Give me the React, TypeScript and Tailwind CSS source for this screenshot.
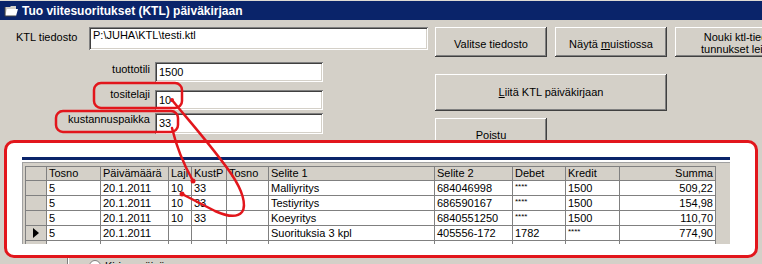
import React from 'react';

const FONT = "font-['Liberation_Sans',Arial,sans-serif]";

const BTN =
  'flex items-center justify-center bg-[#d4d0c8] text-[11px] text-black shadow-[inset_-1px_-1px_#404040,inset_1px_1px_#ffffff,inset_-2px_-2px_#808080,inset_2px_2px_#d4d0c8]';
const INPUT =
  'bg-white text-[11px] leading-[13px] text-black pl-[4px] shadow-[inset_1px_1px_#808080,inset_-1px_-1px_#ffffff,inset_2px_2px_#404040,inset_-2px_-2px_#d4d0c8]';

const COLS = [
  { w: 'w-[54px]', label: 'Tosno' },
  { w: 'w-[68px]', label: 'Päivämäärä' },
  { w: 'w-[23px]', label: 'Laji' },
  { w: 'w-[35px]', label: 'KustP' },
  { w: 'w-[42px]', label: 'Tosno' },
  { w: 'w-[166px]', label: 'Selite 1' },
  { w: 'w-[78px]', label: 'Selite 2' },
  { w: 'w-[53px]', label: 'Debet' },
  { w: 'w-[54px]', label: 'Kredit' },
  { w: 'w-[96px]', label: 'Summa', right: true },
];

const ROWS = [
  ['5', '20.1.2011', '10', '33', '', 'Malliyritys', '684046998', '****', '1500', '509,22'],
  ['5', '20.1.2011', '10', '33', '', 'Testiyritys', '686590167', '****', '1500', '154,98'],
  ['5', '20.1.2011', '10', '33', '', 'Koeyritys', '6840551250', '****', '1500', '110,70'],
  ['5', '20.1.2011', '', '', '', 'Suorituksia 3 kpl', '405556-172', '1782', '****', '774,90'],
  ['', '', '', '', '', '', '', '', '', ''],
];

function Cell({ w, right, text }: { w: string; right?: boolean; text: string }) {
  const stars = text === '****';
  return (
    <div
      className={`${w} h-full shrink-0 border-r border-b border-[#808080] bg-white overflow-hidden whitespace-nowrap px-[2px] flex ${
        right ? 'justify-end' : ''
      } ${stars ? 'items-start pt-[2px] text-[8px] leading-[8px]' : 'items-center text-[11px] leading-[13px]'}`}
    >
      {text}
    </div>
  );
}

function Grid() {
  return (
    <div className="border-t border-l border-[#808080] w-[691px]">
      {/* header */}
      <div className="flex h-[14px]">
        <div className="w-[21px] h-full shrink-0 bg-[#d4d0c8] border-r border-b border-[#808080]" />
        {COLS.map((c, i) => (
          <div
            key={i}
            className={`${c.w} h-full shrink-0 bg-[#d4d0c8] border-r border-b border-[#808080] px-[2px] flex items-center text-[11px] leading-[13px] whitespace-nowrap overflow-hidden ${
              c.right ? 'justify-end' : ''
            }`}
          >
            {c.label}
          </div>
        ))}
      </div>
      {ROWS.map((r, ri) => (
        <div key={ri} className="flex h-[15px]">
          <div className="w-[21px] h-full shrink-0 bg-[#d4d0c8] border-r border-b border-[#808080] flex items-center justify-center">
            {ri === 3 && (
              <svg width="8" height="10" viewBox="0 0 8 10">
                <path d="M1 0 L7 5 L1 10 Z" fill="#000" />
              </svg>
            )}
          </div>
          {COLS.map((c, ci) => (
            <Cell key={ci} w={c.w} right={c.right} text={r[ci]} />
          ))}
        </div>
      ))}
    </div>
  );
}

export default function App() {
  return (
    <div className={`${FONT} relative w-[762px] h-[264px] overflow-hidden bg-[#d4d0c8] text-black`}>
      {/* title bar */}
      <div className="h-[20px] border-t border-[#dedbd4] bg-[#0a246a] flex items-center pl-[4px]">
        <svg width="15" height="13" viewBox="0 0 15 13" className="shrink-0">
          <path d="M1 3 L6 3 L7 2 L12 2 L12 11 L1 11 Z" fill="#d4d0c8" />
          <path d="M3 5 L14 5 L12 12 L1 12 Z" fill="#ffffff" />
          <path d="M1 3 L1 12 L12 12" stroke="#404040" strokeWidth="1" fill="none" />
        </svg>
        <span className="ml-[3px] text-[12px] font-bold text-white leading-[14px] whitespace-nowrap">
          Tuo viitesuoritukset (KTL) päiväkirjaan
        </span>
      </div>

      {/* form */}
      <div className="h-[120px] overflow-hidden">
        <div className="mt-[7px] flex items-start">
          <div className="w-[89px] shrink-0 pl-[16px] pt-[4px] text-[11px] leading-[13px]">KTL tiedosto</div>
          <div className={`${INPUT} w-[339px] h-[23px] shrink-0 pt-[2px]`}>P:\JUHA\KTL\testi.ktl</div>
          <div className={`${BTN} ml-[7px] w-[112px] h-[30px] shrink-0 pt-[4px]`}>Valitse tiedosto</div>
          <div className={`${BTN} ml-[8px] w-[112px] h-[30px] shrink-0 pt-[4px]`}>
            Näytä&nbsp;<span className="underline">m</span>uistiossa
          </div>
          <div className={`${BTN} ml-[8px] w-[148px] h-[30px] shrink-0 text-center leading-[12px] pt-[2px]`}>
            Nouki ktl-tiedoston
            <br />
            tunnukset leikkeelle
          </div>
        </div>

        <div className="flex items-start">
          <div className="w-[435px] shrink-0">
            <div className="mt-[5px] flex items-start">
              <div className="w-[150px] text-right text-[11px] leading-[13px] pt-[1px]">tuottotili</div>
              <div className={`${INPUT} ml-[5px] w-[168px] h-[20px] pt-[4px]`}>1500</div>
            </div>
            <div className="mt-[8px] flex items-start">
              <div className="w-[150px] text-right text-[11px] leading-[13px] -mt-[2px]">tositelaji</div>
              <div className={`${INPUT} ml-[5px] w-[168px] h-[20px] pt-[4px]`}>10</div>
            </div>
            <div className="mt-[3px] flex items-start">
              <div className="w-[150px] text-right text-[11px] leading-[13px]">kustannuspaikka</div>
              <div className={`${INPUT} ml-[5px] w-[168px] h-[21px] pt-[4px]`}>33</div>
            </div>
          </div>
          <div className="flex flex-col">
            <div className={`${BTN} mt-[17px] w-[232px] h-[37px]`}>
              <span className="underline">L</span>iitä KTL päiväkirjaan
            </div>
            <div className={`${BTN} mt-[7px] w-[112px] h-[30px] pt-[4px]`}>Poistu</div>
          </div>
        </div>
      </div>

      {/* annotated grid area */}
      <div className="ml-[4px] w-[754px] h-[118px] rounded-[10px] border-[3px] border-[#e2161c] bg-white pt-[14px] pl-[15px]">
        <div className="w-[708px]">
          <div className="h-[3px] bg-[#0a246a]" />
          <div className="h-[2px] bg-white" />
          <div className="h-[82px] overflow-hidden bg-[#d4d0c8] border-t border-l border-[#a0a0a0] pl-[2px] pt-[3px]">
            <Grid />
          </div>
        </div>
      </div>

      {/* bottom strip */}
      <div className="flex h-[20px]">
        <div className="ml-[67px] w-[2px] h-full border-l border-[#808080] border-r border-r-white" />
        <div className="ml-[20px] flex items-start pt-[2px] gap-[4px]">
          <div className="w-[12px] h-[12px] rounded-full bg-white border border-[#808080] flex items-center justify-center">
            <div className="w-[4px] h-[4px] rounded-full bg-black" />
          </div>
          <span className="text-[11px] leading-[13px]">Kirjauspäivä</span>
        </div>
      </div>

      {/* red annotations */}
      <svg className="absolute left-0 top-0 pointer-events-none" width="762" height="264" viewBox="0 0 762 264">
        <g fill="none" stroke="#e2161c" strokeWidth="2.5" strokeLinecap="round" strokeLinejoin="round">
          <rect x="94" y="83" width="88" height="25" rx="7" />
          <rect x="56" y="111" width="122" height="21" rx="7" />
          <path d="M172 100 C 190 122, 215 150, 232 175 C 242 190, 247 205, 242 212 C 237 218, 226 216, 215 211 L 182 194" />
          <path d="M172 128 C 176 145, 184 165, 193 181" />
        </g>
        <g fill="#e2161c">
          <circle cx="172" cy="100" r="2" />
          <circle cx="182" cy="194" r="2.5" />
          <circle cx="193" cy="181" r="2.5" />
        </g>
      </svg>
    </div>
  );
}
